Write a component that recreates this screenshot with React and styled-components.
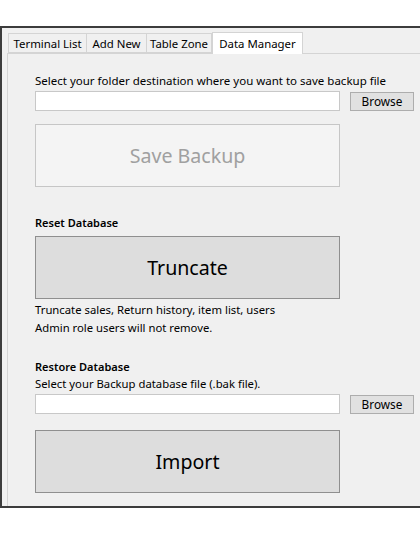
import React from "react";
import styled, { createGlobalStyle } from "styled-components";

const Global = createGlobalStyle`
  html, body { margin: 0; padding: 0; background: #ffffff; }
  body { font-family: "Noto Sans", "Open Sans", sans-serif; color: #000; }
  * { box-sizing: border-box; }
`;

const Frame = styled.div`
  margin-top: 26px;
  height: 482px;
  border: 2px solid #3c3c3c;
  border-right: none;
  background: #f0f0f0;
  padding: 4px 0 0 5px;
  display: flex;
  flex-direction: column;
  overflow: hidden;
`;

const TabStrip = styled.div`
  display: flex;
  align-items: flex-end;
  height: 21px;
  padding-left: 1px;
  position: relative;
  z-index: 1;
`;

const Tab = styled.div`
  height: ${(p) => (p.$active ? "22px" : "20px")};
  margin-bottom: ${(p) => (p.$active ? "-1px" : "0")};
  width: ${(p) => p.$w}px;
  border: 1px solid #d4d4d4;
  border-bottom: ${(p) => (p.$active ? "none" : "1px solid #d4d4d4")};
  border-left: ${(p) => (p.$first || p.$active ? "1px solid #d4d4d4" : "none")};
  background: ${(p) => (p.$active ? "#ffffff" : "#f0f0f0")};
  font-size: 11.4px;
  display: flex;
  align-items: center;
  justify-content: center;
  white-space: nowrap;
  color: #000;
  padding-top: ${(p) => (p.$active ? "0" : "1px")};
`;

const Panel = styled.div`
  flex: 1;
  border-top: 1px solid #d4d4d4;
  border-left: 1px solid #d4d4d4;
  background: #f0f0f0;
  padding: 19px 0 0 27px;
  display: flex;
  flex-direction: column;
`;

const Text = styled.div`
  font-size: ${(p) => p.$size || 11.3}px;
  font-weight: ${(p) => (p.$bold ? 600 : 400)};
  line-height: ${(p) => p.$lh || 16}px;
  margin-top: ${(p) => p.$mt || 0}px;
  white-space: nowrap;
  color: #000;
`;

const Row = styled.div`
  display: flex;
  gap: 10px;
  align-items: center;
  margin-top: ${(p) => p.$mt || 0}px;
`;

const Input = styled.div`
  width: 305px;
  height: 20px;
  background: #ffffff;
  border: 1px solid #c8c8c8;
`;

const SmallButton = styled.div`
  width: 64px;
  height: 19px;
  background: #e1e1e1;
  border: 1px solid #adadad;
  font-size: 11.8px;
  display: flex;
  align-items: center;
  justify-content: center;
  color: #000;
`;

const BigButton = styled.div`
  width: 305px;
  height: 63px;
  margin-top: ${(p) => p.$mt || 0}px;
  background: ${(p) => (p.$disabled ? "#f4f4f4" : "#dddddd")};
  border: 1px solid ${(p) => (p.$disabled ? "#c6c6c6" : "#8f8f8f")};
  color: ${(p) => (p.$disabled ? "#a0a0a0" : "#000000")};
  font-size: 19.6px;
  display: flex;
  align-items: center;
  justify-content: center;
`;

export default function App() {
  return (
    <>
      <Global />
      <Frame>
        <TabStrip>
          <Tab $w={79} $first>Terminal List</Tab>
          <Tab $w={60}>Add New</Tab>
          <Tab $w={65}>Table Zone</Tab>
          <Tab $w={91} $active>Data Manager</Tab>
        </TabStrip>
        <Panel>
          <Text $size={11.5}>Select your folder destination where you want to save backup file</Text>
          <Row $mt={2}>
            <Input />
            <SmallButton>Browse</SmallButton>
          </Row>
          <BigButton $disabled $mt={13}>Save Backup</BigButton>
          <Text $size={11} $bold $mt={28}>Reset Database</Text>
          <BigButton $mt={5}>Truncate</BigButton>
          <Text $lh={18} $mt={2}>Truncate sales, Return history, item list, users</Text>
          <Text $lh={18}>Admin role users will not remove.</Text>
          <Text $size={11} $bold $lh={17} $mt={21}>Restore Database</Text>
          <Text $lh={17}>Select your Backup database file (.bak file).</Text>
          <Row $mt={2}>
            <Input />
            <SmallButton>Browse</SmallButton>
          </Row>
          <BigButton $mt={16}>Import</BigButton>
        </Panel>
      </Frame>
    </>
  );
}
